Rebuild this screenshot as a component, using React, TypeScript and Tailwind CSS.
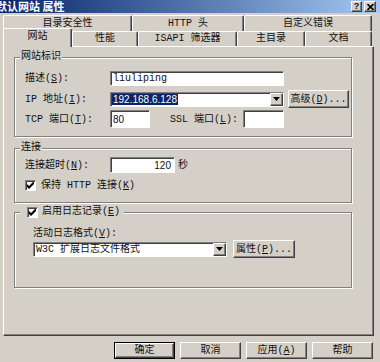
import React from 'react';

// Win2000 classic bevels
const raised =
  'bg-[#d4d0c8] border border-t-white border-l-white border-r-[#404040] border-b-[#404040] shadow-[inset_-1px_-1px_0_#808080]';
const sunken =
  'bg-white border border-t-[#808080] border-l-[#808080] border-r-white border-b-white shadow-[inset_1px_1px_0_#404040]';
const font = "[font-family:'Liberation_Mono','Noto_Sans_CJK_SC',monospace]";

const Arrow = () => (
  <span className={`${raised} w-[13px] h-full flex items-center justify-center`}>
    <svg width="7" height="4" viewBox="0 0 7 4" aria-hidden="true">
      <path d="M0 0 H7 L3.5 4 Z" fill="#000" />
    </svg>
  </span>
);

const Check = () => (
  <span className={`${sunken} w-[11px] h-[11px] flex items-center justify-center shrink-0`}>
    <svg width="7" height="7" viewBox="0 0 7 7" aria-hidden="true">
      <path d="M0 2 L2 4 L7 -1 L7 2 L2 7 L0 5 Z" fill="#000" />
    </svg>
  </span>
);

function Group({
  legend,
  className,
  children,
}: {
  legend: React.ReactNode;
  className: string;
  children: React.ReactNode;
}) {
  return (
    <div
      className={`relative border border-[#808080] shadow-[inset_1px_1px_0_#fff,1px_1px_0_#fff] ${className}`}
    >
      <div className="absolute -top-[7px] left-[5px] h-[12px] bg-[#d4d0c8] px-[1px] flex items-center leading-[12px]">
        {legend}
      </div>
      {children}
    </div>
  );
}

function Tab({ label, w, active }: { label: React.ReactNode; w: string; active?: boolean }) {
  return (
    <div
      className={`${w} ${
        active ? 'relative z-10 h-[19px] -mb-[1px] pb-[2px]' : 'h-full'
      } shrink-0 bg-[#d4d0c8] border-l border-t border-white border-r border-r-[#404040] shadow-[inset_-1px_0_0_#808080] rounded-t-[2px] flex items-center justify-center leading-none`}
    >
      {label}
    </div>
  );
}

function Btn({ children, w, h, def }: { children: React.ReactNode; w: string; h: string; def?: boolean }) {
  if (def) {
    return (
      <div className={`${w} ${h} border border-black flex`}>
        <div className={`${raised} flex-1 flex items-center justify-center`}>{children}</div>
      </div>
    );
  }
  return <div className={`${raised} ${w} ${h} flex items-center justify-center`}>{children}</div>;
}

export default function App() {
  return (
    <div className={`w-[380px] h-[362px] overflow-hidden bg-[#d4d0c8] text-[10px] text-[#111] ${font}`}>
      {/* title bar */}
      <div className="h-[13px] bg-linear-to-r from-[#0a246a] to-[#a6caf0] flex items-center justify-between pr-[4px]">
        <span className="-ml-[4px] text-white font-bold text-[11px] leading-none [font-family:'Noto_Sans_CJK_SC',sans-serif]">
          默认网站 属性
        </span>
        <div className="flex gap-[2px]">
          <span className={`${raised} w-[11px] h-[11px] flex items-center justify-center text-[9px] font-bold leading-none [font-family:'Liberation_Sans',sans-serif]`}>
            ?
          </span>
          <span className={`${raised} w-[12px] h-[11px] flex items-center justify-center`}>
            <svg width="7" height="6" viewBox="0 0 7 6" aria-hidden="true">
              <path d="M0.5 0 L6.5 6 M6.5 0 L0.5 6" stroke="#000" strokeWidth="1.6" />
            </svg>
          </span>
        </div>
      </div>

      {/* tabs */}
      <div className="mt-[2px] pl-[3px]">
        <div className="flex h-[16px]">
          <Tab w="w-[129px]" label="目录安全性" />
          <Tab w="w-[112px]" label="HTTP 头" />
          <Tab w="w-[128px]" label="自定义错误" />
        </div>
        <div className="flex h-[15px] items-end">
          <Tab w="w-[69px]" label="网站" active />
          <Tab w="w-[66px]" label="性能" />
          <Tab w="w-[99px]" label="ISAPI 筛选器" />
          <Tab w="w-[68px]" label="主目录" />
          <Tab w="w-[67px]" label="文档" />
        </div>
      </div>

      {/* page */}
      <div className="ml-[3px] w-[371px] h-[290px] border-l border-t border-white border-r border-b border-r-[#404040] border-b-[#404040] shadow-[inset_-1px_-1px_0_#808080] pl-[10px] pt-[10px]">
        <Group legend="网站标识" className="w-[338px] h-[80px] pt-[13px] pl-[10px]">
          <div className="flex items-center h-[15px]">
            <span className="w-[85px]">
              描述(<u>S</u>):
            </span>
            <div className={`${sunken} w-[174px] h-[15px] pl-[2px] flex items-center`}>liuliping</div>
          </div>
          <div className="flex items-center h-[18px] mt-[4px]">
            <span className="w-[85px]">
              IP 地址(<u>I</u>):
            </span>
            <div className={`${sunken} w-[174px] h-[15px] flex items-center`}>
              <span className="flex-1 pl-[1px] flex items-center">
                <span className="bg-[#0a246a] text-white px-[1px] leading-[11px] [font-family:'Liberation_Sans',sans-serif]">
                  192.168.6.128
                </span>
              </span>
              <Arrow />
            </div>
            <div className="ml-[4px]">
              <Btn w="w-[61px]" h="h-[18px]">
                高级(<u>D</u>)...
              </Btn>
            </div>
          </div>
          <div className="flex items-center h-[18px] mt-[2px]">
            <span className="w-[85px]">
              TCP 端口(<u>T</u>):
            </span>
            <div className={`${sunken} w-[40px] h-[18px] pl-[2px] flex items-center [font-family:'Liberation_Sans',sans-serif]`}>
              80
            </div>
            <span className="ml-[20px] w-[73px]">
              SSL 端口(<u>L</u>):
            </span>
            <div className={`${sunken} w-[41px] h-[18px]`} />
          </div>
        </Group>

        <Group legend="连接" className="w-[338px] h-[55px] mt-[11px] pt-[8px] pl-[10px]">
          <div className="flex items-center h-[16px]">
            <span className="w-[85px]">
              连接超时(<u>N</u>):
            </span>
            <div className={`${sunken} w-[65px] h-[16px] pr-[3px] flex items-center justify-end [font-family:'Liberation_Sans',sans-serif]`}>
              120
            </div>
            <span className="ml-[3px]">秒</span>
          </div>
          <div className="flex items-center h-[14px] mt-[5px]">
            <Check />
            <span className="ml-[5px]">
              保持 HTTP 连接(<u>K</u>)
            </span>
          </div>
        </Group>

        <Group
          legend={
            <span className="flex items-center pl-[6px] pr-[3px]">
              <Check />
              <span className="ml-[4px]">
                启用日志记录(<u>E</u>)
              </span>
            </span>
          }
          className="w-[338px] h-[76px] mt-[9px] pt-[14px] pl-[18px]"
        >
          <div className="h-[12px] flex items-center">
            活动日志格式(<u>V</u>):
          </div>
          <div className="flex items-center h-[18px] mt-[1px]">
            <div className={`${sunken} w-[194px] h-[15px] flex items-center`}>
              <span className="flex-1 pl-[2px]">W3C 扩展日志文件格式</span>
              <Arrow />
            </div>
            <div className="ml-[6px]">
              <Btn w="w-[62px]" h="h-[18px]">
                属性(<u>P</u>)...
              </Btn>
            </div>
          </div>
        </Group>
      </div>

      {/* dialog buttons */}
      <div className="mt-[6px] flex justify-end gap-[5px] pr-[7px]">
        <Btn w="w-[61px]" h="h-[17px]" def>
          确定
        </Btn>
        <Btn w="w-[61px]" h="h-[17px]">
          取消
        </Btn>
        <Btn w="w-[61px]" h="h-[17px]">
          应用(<u>A</u>)
        </Btn>
        <Btn w="w-[61px]" h="h-[17px]">
          帮助
        </Btn>
      </div>
    </div>
  );
}
